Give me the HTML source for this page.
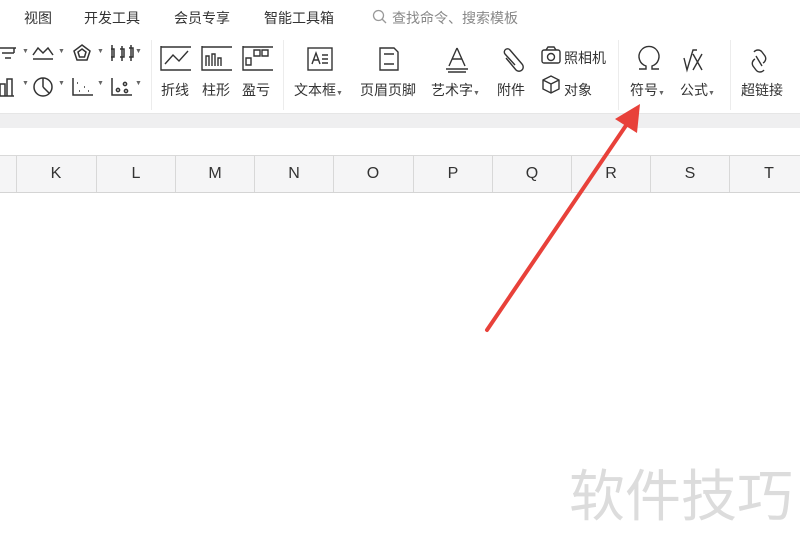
<!DOCTYPE html>
<html><head><meta charset="utf-8"><style>
*{margin:0;padding:0;box-sizing:border-box}
body{width:800px;height:551px;overflow:hidden;background:#fff;position:relative;font-family:"Liberation Sans","Noto Sans CJK SC",sans-serif;color:#333}
.a{position:absolute;white-space:nowrap}
.t{font-size:14px;color:#333}
.l{font-size:14px;color:#333}
svg{position:absolute;overflow:visible}
.col{position:absolute;top:156px;height:36px;border-left:1px solid #d8d8d8;font-size:16px;color:#333;text-align:center;line-height:36px;width:79px}
.sep{position:absolute;top:40px;width:1px;height:70px;background:#ececec}
</style></head><body>
<div class="a" style="left:0;top:0;width:800px;height:36px;background:#fff"></div>
<div class="a t" style="left:24px;top:8px">视图</div>
<div class="a t" style="left:84px;top:8px">开发工具</div>
<div class="a t" style="left:174px;top:8px">会员专享</div>
<div class="a t" style="left:264px;top:8px">智能工具箱</div>
<svg style="left:372px;top:9px" width="16" height="16"><circle cx="6.5" cy="6.5" r="5" fill="none" stroke="#999" stroke-width="1.3"/><line x1="10" y1="10" x2="14" y2="14" stroke="#999" stroke-width="1.3"/></svg>
<div class="a t" style="left:392px;top:8px;color:#888">查找命令、搜索模板</div>

<svg style="left:0;top:44px" width="150" height="52" fill="none" stroke="#333" stroke-width="1.5">
<path d="M0 4h16M2 9h12M5 14h6M14 4v5"/>
<path d="M33 11l5-7 5 5 5-5 5 7M33 15h20"/>
<path d="M82 1l8 6-3 9h-10l-3-9z M82 5l4 3-1.5 5h-5l-1.5-5z"/>
<path d="M112 1v16M111 5h3v8h-3M122 2v15M120 5h4v8h-4M131 1v16M129 4h4v9h-4"/>
<path d="M0 52V40h5v12M7 52V35h5v17M0 52h14"/>
<circle cx="43" cy="43" r="9"/><path d="M43 43V34M43 43l6 6"/>
<path d="M73 34v17h20M77 39h1M84 43h1M79 47h1M88 47h1"/>
<path d="M112 34v17h20"/><circle cx="118" cy="46" r="1.6"/><circle cx="125" cy="40" r="1.6"/><circle cx="126" cy="47" r="1.6"/>
</svg>
<div class="a" style="left:22px;top:48px;font-size:7px;color:#666">▼</div>
<div class="a" style="left:58px;top:48px;font-size:7px;color:#666">▼</div>
<div class="a" style="left:97px;top:48px;font-size:7px;color:#666">▼</div>
<div class="a" style="left:135px;top:48px;font-size:7px;color:#666">▼</div>
<div class="a" style="left:22px;top:80px;font-size:7px;color:#666">▼</div>
<div class="a" style="left:58px;top:80px;font-size:7px;color:#666">▼</div>
<div class="a" style="left:97px;top:80px;font-size:7px;color:#666">▼</div>
<div class="a" style="left:135px;top:80px;font-size:7px;color:#666">▼</div>
<div class="sep" style="left:151px"></div>

<svg style="left:161px;top:46px" width="120" height="26" fill="none" stroke="#333" stroke-width="1.4">
<path d="M0 0v24h30M0 1h30M4 18l8-9 6 6 9-10"/>
<path d="M41 0v24h30M41 1h30M45 20v-10h3v10M51 20v-12h3v12M57 20v-8h3v8"/>
<path d="M82 0v24h30M82 1h30M85 12h5v7h-5zM93 4h6v6h-6zM101 4h6v6h-6z"/>
</svg>
<div class="a l" style="left:161px;top:80px">折线</div>
<div class="a l" style="left:202px;top:80px">柱形</div>
<div class="a l" style="left:242px;top:80px">盈亏</div>
<div class="sep" style="left:283px"></div>

<svg style="left:306px;top:46px" width="300" height="30" fill="none" stroke="#333" stroke-width="1.4">
<rect x="2" y="2" width="24" height="22"/><path d="M6 18l4-11 4 11M8 14h4M16 9h6M16 13h6M16 17h6"/>
<path d="M74 2h14l4 4v18H74zM78 8h10M78 18h10"/>
<path d="M151 2l-8 18M151 2l8 18M146 13h10M140 23h22M142 26h18"/>
<path d="M200 12l10 12a4 4 0 0 0 6-6l-12-14a3 3 0 0 0-5 4l10 11"/>
<rect x="236" y="4" width="18" height="13" rx="2"/><circle cx="245" cy="11" r="3.5"/><path d="M240 4l2-3h6l2 3"/>
<path d="M237 34l8-4 8 4v9l-8 4-8-4zM237 34l8 4 8-4M245 38v9"/>
</svg>
<div class="a l" style="left:294px;top:80px">文本框<span style="font-size:7px;color:#666">▼</span></div>
<div class="a l" style="left:360px;top:80px">页眉页脚</div>
<div class="a l" style="left:431px;top:80px">艺术字<span style="font-size:7px;color:#666">▼</span></div>
<div class="a l" style="left:497px;top:80px">附件</div>
<div class="a l" style="left:564px;top:48px">照相机</div>
<div class="a l" style="left:564px;top:80px">对象</div>
<div class="sep" style="left:618px"></div>

<svg style="left:636px;top:46px" width="170" height="30" fill="none" stroke="#333" stroke-width="1.4">
<path d="M3 24h7v-3a10 10 0 1 1 6 0v3h7" transform="translate(0,-1)"/>
<path d="M48 12l3 12 6-20h4M57 8l9 16M66 8l-9 16"/>
<path d="M118 6a5 5 0 0 1 8 0l3 4a5 5 0 0 1-2 7M128 24a5 5 0 0 1-8 0l-3-4a5 5 0 0 1 2-7M120 10l6 10"/>
</svg>
<div class="a l" style="left:630px;top:80px">符号<span style="font-size:7px;color:#666">▼</span></div>
<div class="a l" style="left:680px;top:80px">公式<span style="font-size:7px;color:#666">▼</span></div>
<div class="sep" style="left:730px"></div>
<div class="a l" style="left:741px;top:80px">超链接</div>

<div class="a" style="left:0;top:113px;width:800px;height:15px;background:#efeff0;border-top:1px solid #e6e6e6"></div>
<div class="a" style="left:0;top:155px;width:800px;height:38px;background:#f5f5f6;border-top:1px solid #d9d9d9;border-bottom:1px solid #d4d4d4"></div>
<div class="col" style="left:16px">K</div>
<div class="col" style="left:96px">L</div>
<div class="col" style="left:175px">M</div>
<div class="col" style="left:254px">N</div>
<div class="col" style="left:333px">O</div>
<div class="col" style="left:413px">P</div>
<div class="col" style="left:492px">Q</div>
<div class="col" style="left:571px">R</div>
<div class="col" style="left:650px">S</div>
<div class="col" style="left:729px">T</div>

<svg style="left:0;top:0" width="800" height="551">
<line x1="487" y1="330" x2="627" y2="124" stroke="#e8413a" stroke-width="4" stroke-linecap="round"/>
<polygon points="640,104 615,119 637,133" fill="#e8413a"/>
</svg>
<div class="a" style="left:569px;top:452px;font-size:56px;color:#dcdcdc;letter-spacing:0">软件技巧</div>
</body></html>
